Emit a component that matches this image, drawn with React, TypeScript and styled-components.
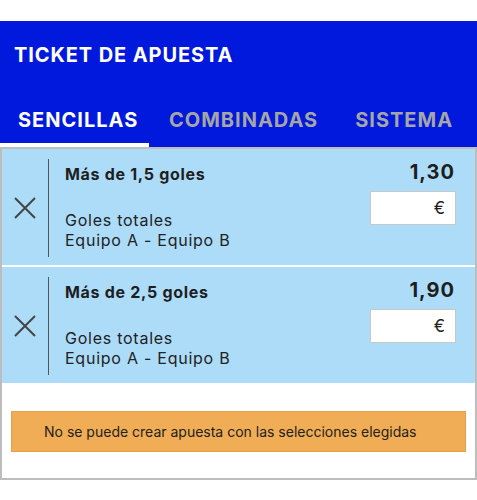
import React from "react";
import styled, { createGlobalStyle } from "styled-components";

const Global = createGlobalStyle`
  html, body { margin: 0; padding: 0; background: #fff; }
  body { font-family: Inter, "Noto Sans", sans-serif; color: #1e1e1e; }
  * { box-sizing: border-box; }
`;

const Page = styled.div`
  padding-top: 21px;
  width: 477px;
`;

const Header = styled.header`
  background: #0019dc;
  padding-top: 22px;
`;

const Title = styled.h1`
  margin: 0 0 41px 14px;
  font-size: 20px;
  line-height: 24px;
  font-weight: 700;
  color: #fff;
  letter-spacing: 0.9px;
`;

const Tabs = styled.nav`
  display: flex;
  align-items: flex-end;
`;

const Tab = styled.div<{ $active?: boolean; $pl: number; $w?: number }>`
  font-size: 20px;
  line-height: 24px;
  font-weight: 700;
  letter-spacing: 1px;
  color: ${(p) => (p.$active ? "#fff" : "#a6a6a6")};
  padding: 0 0 11px ${(p) => p.$pl}px;
  border-bottom: 4px solid ${(p) => (p.$active ? "#fff" : "transparent")};
  ${(p) => (p.$w ? `width: ${p.$w}px;` : "")}
  white-space: nowrap;
`;

const Box = styled.section`
  border: 2px solid #bdbdbd;
  background: #fff;
`;

const List = styled.div`
  display: flex;
  flex-direction: column;
  gap: 2px;
`;

const Item = styled.div`
  display: flex;
  background: #addcf9;
  padding: 10px 19px 8px 0;
  height: 116px;
`;

const Remove = styled.button`
  width: 46px;
  border: none;
  background: transparent;
  padding: 0;
  display: flex;
  align-items: center;
  justify-content: center;
  cursor: pointer;
`;

const Content = styled.div`
  flex: 1;
  display: flex;
  border-left: 1px solid #555;
  padding-left: 16px;
`;

const Info = styled.div`
  flex: 1;
  display: flex;
  flex-direction: column;
`;

const SelName = styled.div`
  margin-top: 5px;
  font-size: 16px;
  line-height: 20px;
  font-weight: 700;
  letter-spacing: 0.7px;
  color: #1e1e1e;
`;

const Sub = styled.div`
  margin-top: 26px;
  font-size: 16px;
  line-height: 20px;
  letter-spacing: 0.75px;
  color: #222;
`;

const Side = styled.div`
  display: flex;
  flex-direction: column;
  align-items: flex-end;
`;

const Odds = styled.div`
  margin-top: 1px;
  font-size: 20px;
  line-height: 24px;
  font-weight: 700;
  letter-spacing: 1px;
  color: #1e1e1e;
  padding-right: 1px;
`;

const Stake = styled.div`
  margin-top: 7px;
  width: 86px;
  height: 34px;
  background: #fff;
  border: 1px solid #c8c8c8;
  display: flex;
  align-items: center;
  justify-content: flex-end;
  padding-right: 10px;
  font-size: 17px;
  color: #1e1e1e;
`;

const Warning = styled.div`
  margin: 28px 9px 26px;
  height: 41px;
  background: #f0ad55;
  border: 1px solid #e3a24e;
  display: flex;
  align-items: center;
  padding-left: 32px;
  font-size: 14px;
  color: #222;
`;

const CloseIcon = () => (
  <svg width="22" height="22" viewBox="0 0 22 22">
    <path d="M1 1 L21 21 M21 1 L1 21" stroke="#444" strokeWidth="2" fill="none" />
  </svg>
);

const bets = [
  { name: "Más de 1,5 goles", odds: "1,30" },
  { name: "Más de 2,5 goles", odds: "1,90" },
];

export default function App() {
  return (
    <>
      <Global />
      <Page>
        <Header>
          <Title>TICKET DE APUESTA</Title>
          <Tabs>
            <Tab $active $pl={18} $w={149}>SENCILLAS</Tab>
            <Tab $pl={20}>COMBINADAS</Tab>
            <Tab $pl={37}>SISTEMA</Tab>
          </Tabs>
        </Header>
        <Box>
          <List>
            {bets.map((b) => (
              <Item key={b.name}>
                <Remove aria-label="Eliminar">
                  <CloseIcon />
                </Remove>
                <Content>
                  <Info>
                    <SelName>{b.name}</SelName>
                    <Sub>
                      Goles totales
                      <br />
                      Equipo A - Equipo B
                    </Sub>
                  </Info>
                  <Side>
                    <Odds>{b.odds}</Odds>
                    <Stake>€</Stake>
                  </Side>
                </Content>
              </Item>
            ))}
          </List>
          <Warning>No se puede crear apuesta con las selecciones elegidas</Warning>
        </Box>
      </Page>
    </>
  );
}
